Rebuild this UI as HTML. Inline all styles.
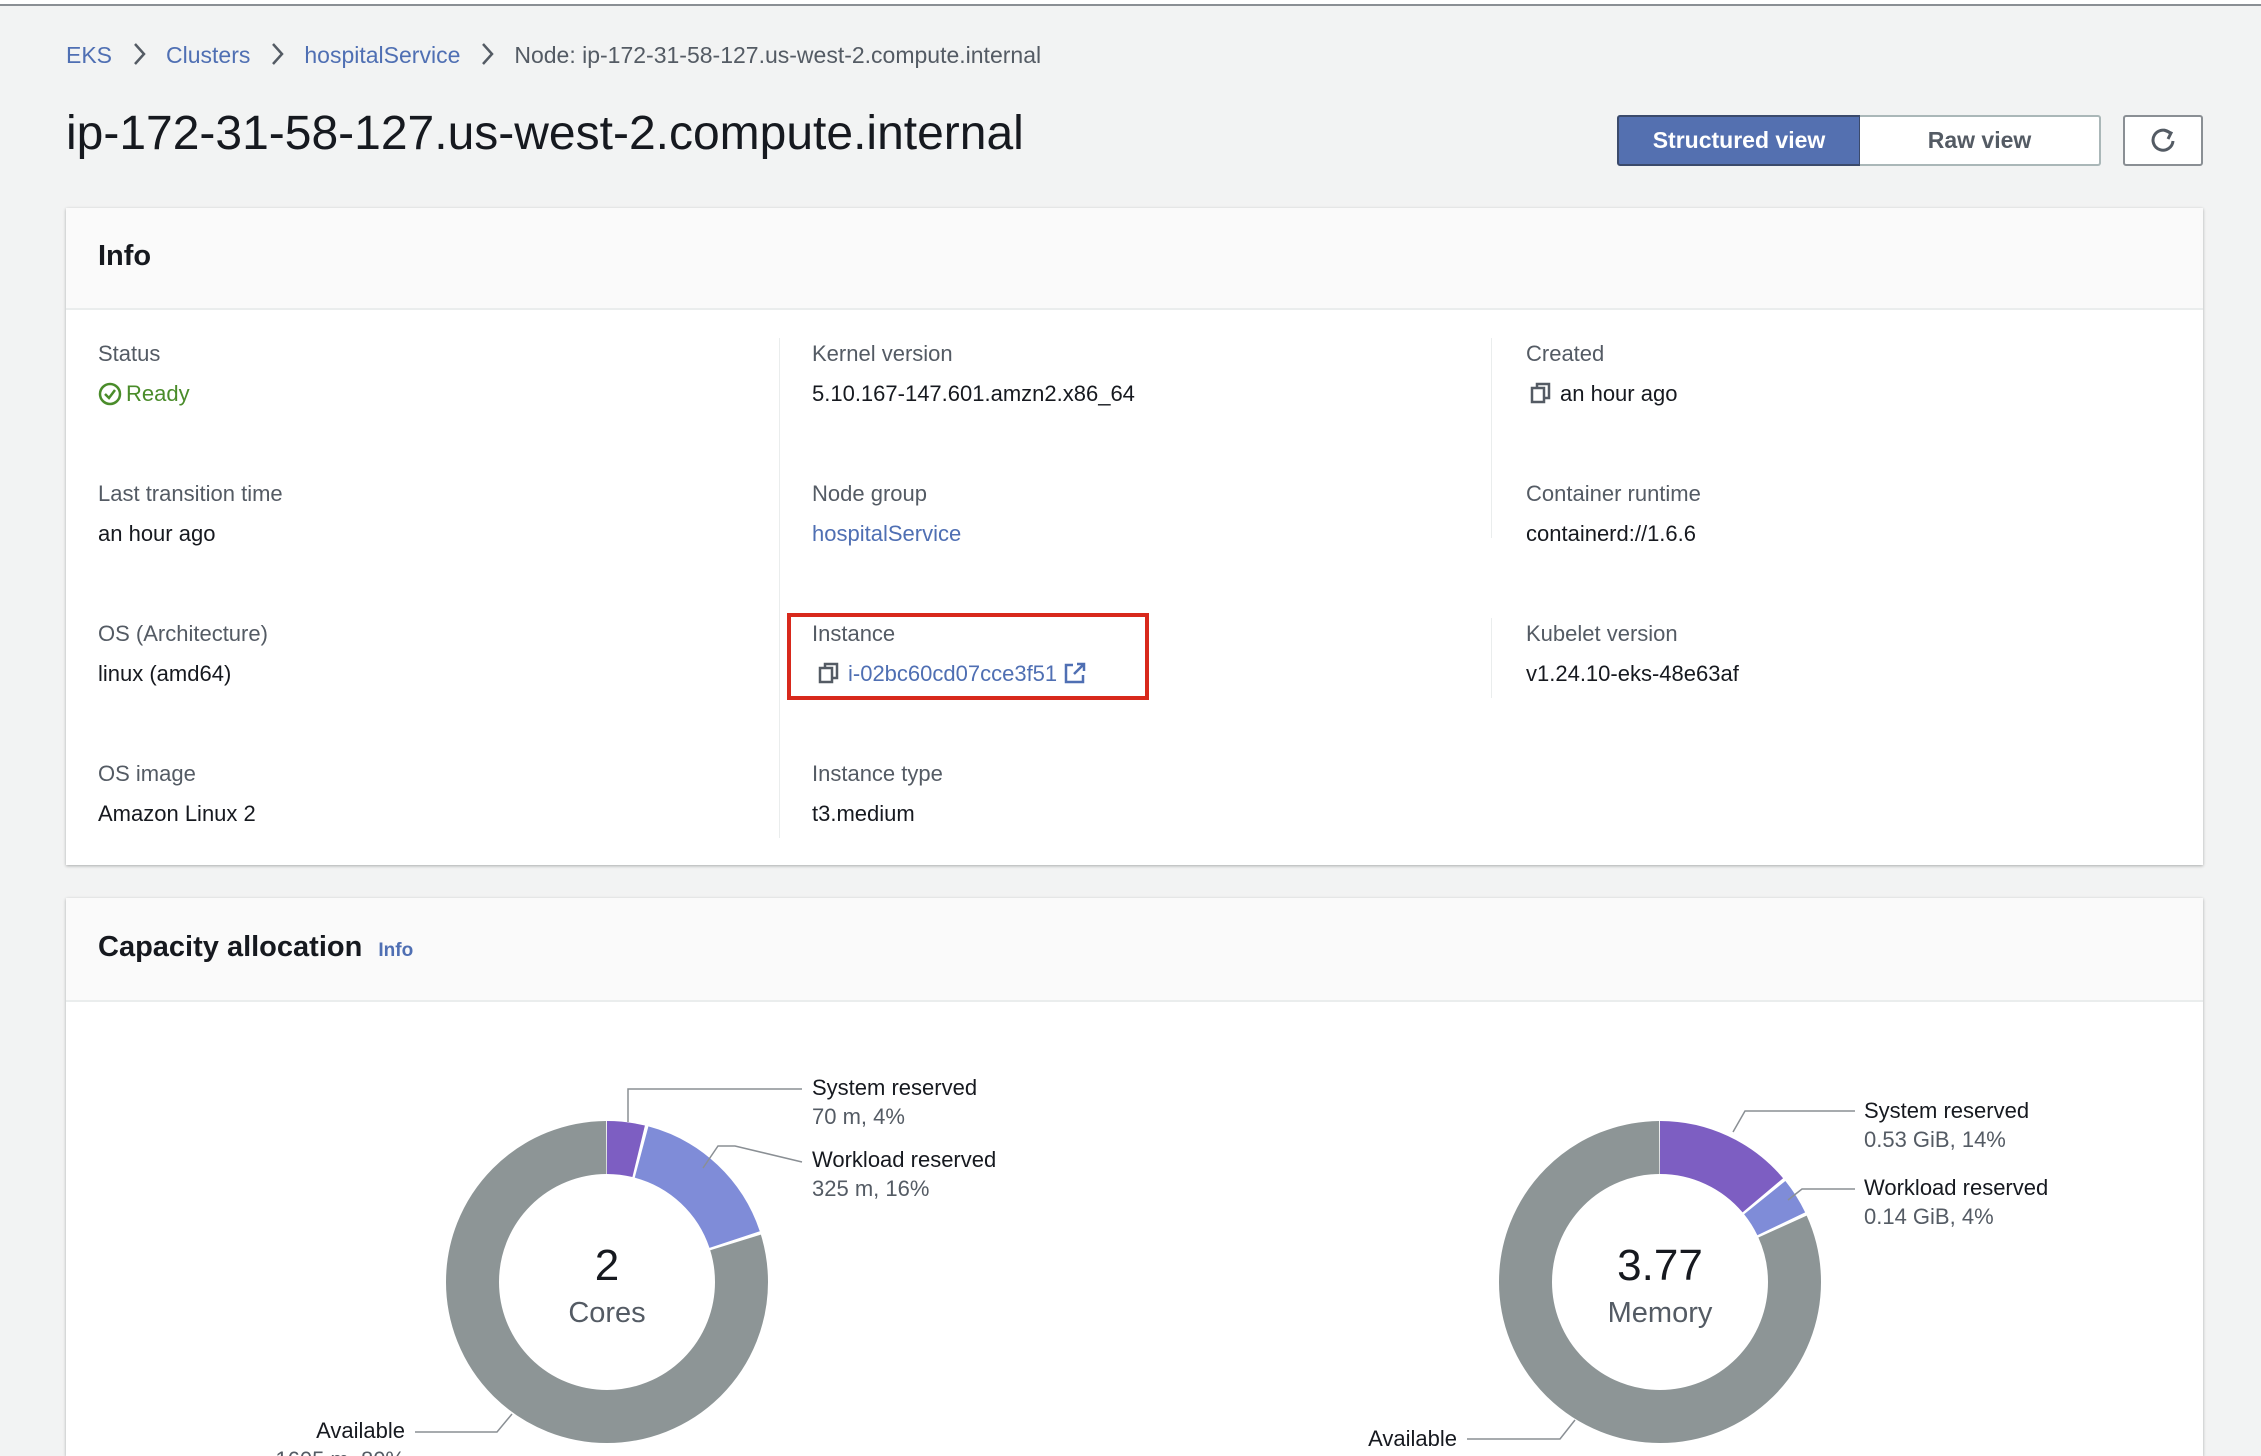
<!DOCTYPE html>
<html style="width:2261px;height:1456px;overflow:hidden"><head><meta charset="utf-8"><style>
*{margin:0;padding:0;box-sizing:border-box}
body{width:2261px;height:1456px;overflow:hidden;background:#f2f3f3;font-family:"Liberation Sans",sans-serif;color:#16191f;position:relative}
.abs{position:absolute;white-space:nowrap}
.topline{position:absolute;left:0;top:0;width:2261px;height:6px;background:#fff;border-bottom:2px solid #8a8f94}
.bc{top:42px;left:66px;font-size:23px;color:#545b64}
.bc a{color:#4f6fb3;text-decoration:none}
.bc svg{margin:0 20px;vertical-align:-3px}
.title{top:106px;left:66px;font-size:48px;color:#16191f}
.btn{position:absolute;top:115px;height:51px;font-size:23px;font-weight:bold;display:flex;align-items:center;justify-content:center}
.card{position:absolute;left:66px;width:2137px;background:#fff;box-shadow:0 1px 3px rgba(0,0,0,.3)}
.card .hd{background:#fafafa;border-bottom:2px solid #eaeded;position:relative}
.lbl{font-size:22px;color:#545b64}
.val{font-size:22px;color:#16191f}
.link{color:#4f6fb3}
.vd{position:absolute;width:1px;background:#eaeded}
</style></head><body>
<div class="topline"></div>
<div class="abs bc"><a>EKS</a><svg width="14" height="24" viewBox="0 0 14 24"><path d="M3 2l9 10-9 10" fill="none" stroke="#545b64" stroke-width="2.5"/></svg><a>Clusters</a><svg width="14" height="24" viewBox="0 0 14 24"><path d="M3 2l9 10-9 10" fill="none" stroke="#545b64" stroke-width="2.5"/></svg><a>hospitalService</a><svg width="14" height="24" viewBox="0 0 14 24"><path d="M3 2l9 10-9 10" fill="none" stroke="#545b64" stroke-width="2.5"/></svg>Node: ip-172-31-58-127.us-west-2.compute.internal</div>
<div class="abs title">ip-172-31-58-127.us-west-2.compute.internal</div>
<div class="btn" style="left:1617px;width:244px;background:#5470b0;color:#fff;border:2px solid #3b4a6b;border-radius:3px 0 0 3px">Structured view</div>
<div class="btn" style="left:1860px;width:241px;background:#fff;color:#545b64;border:2px solid #aab7b8;border-left:none;border-radius:0 3px 3px 0">Raw view</div>
<div class="btn" style="left:2123px;width:80px;background:#fff;border:2px solid #8a8f94;border-radius:3px">
<svg width="30" height="30" viewBox="0 0 30 30"><path d="M22 7A10 10 0 1 0 25 15" fill="none" stroke="#545b64" stroke-width="3"/><path d="M16 4L23 7L20 13" fill="none" stroke="#545b64" stroke-width="3"/></svg></div>

<div class="card" style="top:208px;height:657px">
<div class="hd" style="height:102px"><div class="abs" style="left:32px;top:32px;font-size:29px;font-weight:bold">Info</div></div>
<div class="vd" style="left:713px;top:130px;height:500px"></div>
<div class="vd" style="left:1425px;top:130px;height:200px"></div>
<div class="vd" style="left:1425px;top:410px;height:80px"></div>
</div>
<div class="abs lbl" style="left:98px;top:341px">Status</div>
<div class="abs val" style="left:98px;top:381px;color:#4a8c2a"><svg width="24" height="24" viewBox="0 0 24 24" style="vertical-align:-5px;margin-right:4px"><circle cx="12" cy="12" r="10" fill="none" stroke="#4a8c2a" stroke-width="2.5"/><path d="M7 12l4 4 6-8" fill="none" stroke="#4a8c2a" stroke-width="2.5"/></svg>Ready</div>
<div class="abs lbl" style="left:812px;top:341px">Kernel version</div>
<div class="abs val" style="left:812px;top:381px">5.10.167-147.601.amzn2.x86_64</div>
<div class="abs lbl" style="left:1526px;top:341px">Created</div>
<div class="abs val" style="left:1530px;top:381px"><svg width="22" height="24" viewBox="0 0 22 24" style="vertical-align:-4px;margin-right:8px"><rect x="2" y="7" width="12" height="14" fill="none" stroke="#545b64" stroke-width="2.5"/><path d="M7 7V3h12v14h-5" fill="none" stroke="#545b64" stroke-width="2.5"/></svg>an hour ago</div>

<div class="abs lbl" style="left:98px;top:481px">Last transition time</div>
<div class="abs val" style="left:98px;top:521px">an hour ago</div>
<div class="abs lbl" style="left:812px;top:481px">Node group</div>
<div class="abs val link" style="left:812px;top:521px">hospitalService</div>
<div class="abs lbl" style="left:1526px;top:481px">Container runtime</div>
<div class="abs val" style="left:1526px;top:521px">containerd://1.6.6</div>

<div class="abs lbl" style="left:98px;top:621px">OS (Architecture)</div>
<div class="abs val" style="left:98px;top:661px">linux (amd64)</div>
<div class="abs" style="left:787px;top:613px;width:362px;height:87px;border:4px solid #d8291c"></div>
<div class="abs lbl" style="left:812px;top:621px">Instance</div>
<div class="abs val link" style="left:818px;top:661px"><svg width="22" height="24" viewBox="0 0 22 24" style="vertical-align:-4px;margin-right:8px"><rect x="2" y="7" width="12" height="14" fill="none" stroke="#545b64" stroke-width="2.5"/><path d="M7 7V3h12v14h-5" fill="none" stroke="#545b64" stroke-width="2.5"/></svg>i-02bc60cd07cce3f51 <svg width="24" height="24" viewBox="0 0 24 24" style="vertical-align:-4px"><path d="M10 4H3v17h17v-7M14 3h7v7M21 3L11 13" fill="none" stroke="#4f6fb3" stroke-width="2.5"/></svg></div>
<div class="abs lbl" style="left:1526px;top:621px">Kubelet version</div>
<div class="abs val" style="left:1526px;top:661px">v1.24.10-eks-48e63af</div>

<div class="abs lbl" style="left:98px;top:761px">OS image</div>
<div class="abs val" style="left:98px;top:801px">Amazon Linux 2</div>
<div class="abs lbl" style="left:812px;top:761px">Instance type</div>
<div class="abs val" style="left:812px;top:801px">t3.medium</div>

<div class="card" style="top:898px;height:558px">
<div class="hd" style="height:104px"><div class="abs" style="left:32px;top:33px;font-size:29px;font-weight:bold">Capacity allocation <span style="font-size:19px;color:#4f6fb3;margin-left:8px">Info</span></div></div>
</div>

<svg class="abs" style="left:0;top:0" width="2261" height="1456">
<g transform="rotate(-90 607 1282)" fill="none" stroke-width="53">
<circle cx="607" cy="1282" r="134.5" stroke="#8d9596" stroke-dasharray="673 172" stroke-dashoffset="-171"/>
<circle cx="607" cy="1282" r="134.5" stroke="#7d5ec2" stroke-dasharray="32 813" stroke-dashoffset="0"/>
<circle cx="607" cy="1282" r="134.5" stroke="#7f8cd8" stroke-dasharray="133 712" stroke-dashoffset="-35"/>
</g>
<g transform="rotate(-90 1660 1282)" fill="none" stroke-width="53">
<circle cx="1660" cy="1282" r="134.5" stroke="#8d9596" stroke-dasharray="690 155" stroke-dashoffset="-154"/>
<circle cx="1660" cy="1282" r="134.5" stroke="#7d5ec2" stroke-dasharray="117 728" stroke-dashoffset="0"/>
<circle cx="1660" cy="1282" r="134.5" stroke="#7f8cd8" stroke-dasharray="31 814" stroke-dashoffset="-120"/>
</g>
<g fill="none" stroke="#8a8f94" stroke-width="1.5">
<path d="M628 1122V1089H802"/><path d="M703 1168L718 1146H735L802 1162"/><path d="M415 1432H497L512 1414"/>
<path d="M1733 1132L1745 1111H1855"/><path d="M1788 1200L1802 1189H1855"/><path d="M1467 1439H1560L1575 1420"/>
</g>
<g font-family="Liberation Sans,sans-serif" text-anchor="middle">
<text x="607" y="1280" font-size="44" fill="#16191f">2</text>
<text x="607" y="1322" font-size="29" fill="#545b64">Cores</text>
<text x="1660" y="1280" font-size="44" fill="#16191f">3.77</text>
<text x="1660" y="1322" font-size="29" fill="#545b64">Memory</text>
</g>
<g font-family="Liberation Sans,sans-serif" font-size="22">
<text x="812" y="1095" fill="#16191f">System reserved</text><text x="812" y="1124" fill="#545b64">70 m, 4%</text>
<text x="812" y="1167" fill="#16191f">Workload reserved</text><text x="812" y="1196" fill="#545b64">325 m, 16%</text>
<text x="1864" y="1118" fill="#16191f">System reserved</text><text x="1864" y="1147" fill="#545b64">0.53 GiB, 14%</text>
<text x="1864" y="1195" fill="#16191f">Workload reserved</text><text x="1864" y="1224" fill="#545b64">0.14 GiB, 4%</text>
<text x="405" y="1438" fill="#16191f" text-anchor="end">Available</text><text x="405" y="1467" fill="#545b64" text-anchor="end">1605 m, 80%</text>
<text x="1457" y="1446" fill="#16191f" text-anchor="end">Available</text>
</g>
</svg>
</body></html>
